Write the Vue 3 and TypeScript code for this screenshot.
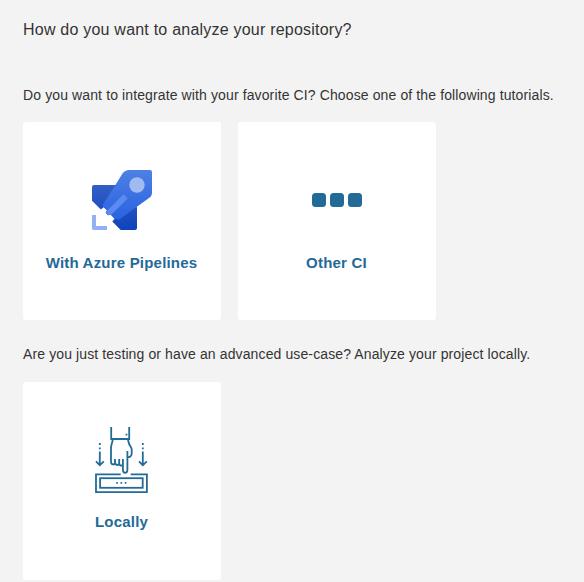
<script setup lang="ts">
const ciTutorials: { id: string; label: string }[] = [
  { id: 'azure', label: 'With Azure Pipelines' },
  { id: 'other', label: 'Other CI' },
]
</script>

<template>
  <main class="page">
    <h1 class="title">How do you want to analyze your repository?</h1>

    <p class="prompt">Do you want to integrate with your favorite CI? Choose one of the following tutorials.</p>
    <div class="cards">
      <button v-for="item in ciTutorials" :key="item.id" class="card" type="button">
        <span class="icon">
          <svg v-if="item.id === 'azure'" width="60" height="60" viewBox="0 0 60 60">
            <defs>
              <linearGradient id="wing" x1="0" y1="0" x2="0" y2="1">
                <stop offset="0" stop-color="#325fc6" />
                <stop offset="1" stop-color="#0f43bb" />
              </linearGradient>
              <linearGradient id="hull" x1="0" y1="0" x2="0" y2="1">
                <stop offset="0" stop-color="#4e80e4" />
                <stop offset="1" stop-color="#2a62e1" />
              </linearGradient>
            </defs>
            <path
              fill="url(#wing)"
              d="M2 15H25L30 40L45 37V58Q45 60 43 60H28.7L20.3 51.6L22.7 48.8L18.6 44.4L16 45.2L13.7 42.5L15 40.2L11.6 37.2L8.9 39.6L0 30.7V17Q0 15 2 15Z"
            />
            <path
              fill="url(#hull)"
              d="M37 0H58Q60 0 60 2V22.5Q60 26 57 28L27 49.7L22.7 48.8L18.6 44.4L16 45.2L13.7 42.5L15 40.2L10.3 35.6L24 14L30.5 3.5Q33 0 37 0Z"
            />
            <path fill="#5b8bee" d="M31.5 24.3L35.6 28.4L18.8 45.2L18.4 44.4L16 45.2L13.7 42.5L14.3 41.5Z" />
            <circle cx="45" cy="15" r="7.7" fill="#a1bbf2" />
            <path fill="#92b1f4" d="M0 45H4V56H15V60H1.5Q0 60 0 58.5Z" />
          </svg>
          <svg v-else width="50" height="14" viewBox="0 0 50 14" fill="#236a97">
            <rect width="14" height="14" rx="3.5" />
            <rect x="18" width="14" height="14" rx="3.5" />
            <rect x="36" width="14" height="14" rx="3.5" />
          </svg>
        </span>
        <span class="label">{{ item.label }}</span>
      </button>
    </div>

    <p class="prompt local">Are you just testing or have an advanced use-case? Analyze your project locally.</p>
    <div class="cards">
      <button class="card" type="button">
        <span class="icon">
          <svg
            width="56"
            height="68"
            viewBox="0 0 56 68"
            fill="none"
            stroke="#236a97"
            stroke-width="1.8"
          >
            <path d="M17.2 1V13H35.2V1" />
            <path
              d="M18.7 13.5C18.5 17 17 18.5 17 22V35.5C17 39.3 21 39.3 21 36.5V33M21 36C21 39.8 25.2 39.8 25.2 37V33M25.2 37C25.2 40.5 28.9 40.2 28.9 37.5M28.9 33V43.5C28.9 48 33.4 48 33.4 43.5V25V30C34.2 32.2 37.7 30.7 37.7 27.8V23.5C37.7 21 35.5 20 35 17.5L33.9 13.5"
            />
            <path d="M26.7 48.3H2V66.2H52.9V48.3H36.7" />
            <rect x="6.1" y="52.2" width="42.6" height="9.6" />
            <path d="M5.8 25.5V39.5M2 35.3L5.8 39.3L9.8 35.3M48.8 25.5V39.5M45 35.3L48.8 39.3L52.8 35.3" />
            <path
              d="M4.9 18H6.7M4.9 22.3H6.7M47.9 18H49.7M47.9 22.3H49.7M31.6 8.7H33.4M22.2 56.8H23.8M26.5 56.8H28.1M30.8 56.8H32.4"
            />
          </svg>
        </span>
        <span class="label">Locally</span>
      </button>
    </div>
  </main>
</template>

<style>
body {
  margin: 0;
  background: #f3f3f3;
}
</style>

<style scoped>
.page {
  box-sizing: border-box;
  height: 582px;
  padding: 20px 0 0 23px;
  overflow: hidden;
  background: #f3f3f3;
  color: #333;
  font-family: 'Liberation Sans', Arial, sans-serif;
}
.title {
  margin: 0;
  font-size: 16px;
  line-height: 20px;
  font-weight: 400;
  letter-spacing: 0.22px;
  white-space: nowrap;
}
.prompt {
  margin: 45px 0 17px;
  font-size: 14px;
  line-height: 20px;
  letter-spacing: 0.118px;
  white-space: nowrap;
}
.prompt.local {
  margin: 24px 0 18px;
}
.cards {
  display: flex;
  gap: 17px;
}
.card {
  display: flex;
  flex-direction: column;
  align-items: center;
  box-sizing: border-box;
  width: 198px;
  height: 198px;
  padding: 38px 0 0;
  border: 0;
  border-radius: 3px;
  background: #fff;
  color: #236a97;
  font-family: inherit;
}
.icon {
  display: flex;
  align-items: center;
  justify-content: center;
  height: 80px;
}
.label {
  margin: 13px 1px 0 0;
  font-size: 15px;
  line-height: 20px;
  font-weight: 700;
  letter-spacing: 0.2px;
}
.local + .cards .label {
  margin-top: 12px;
}
</style>
